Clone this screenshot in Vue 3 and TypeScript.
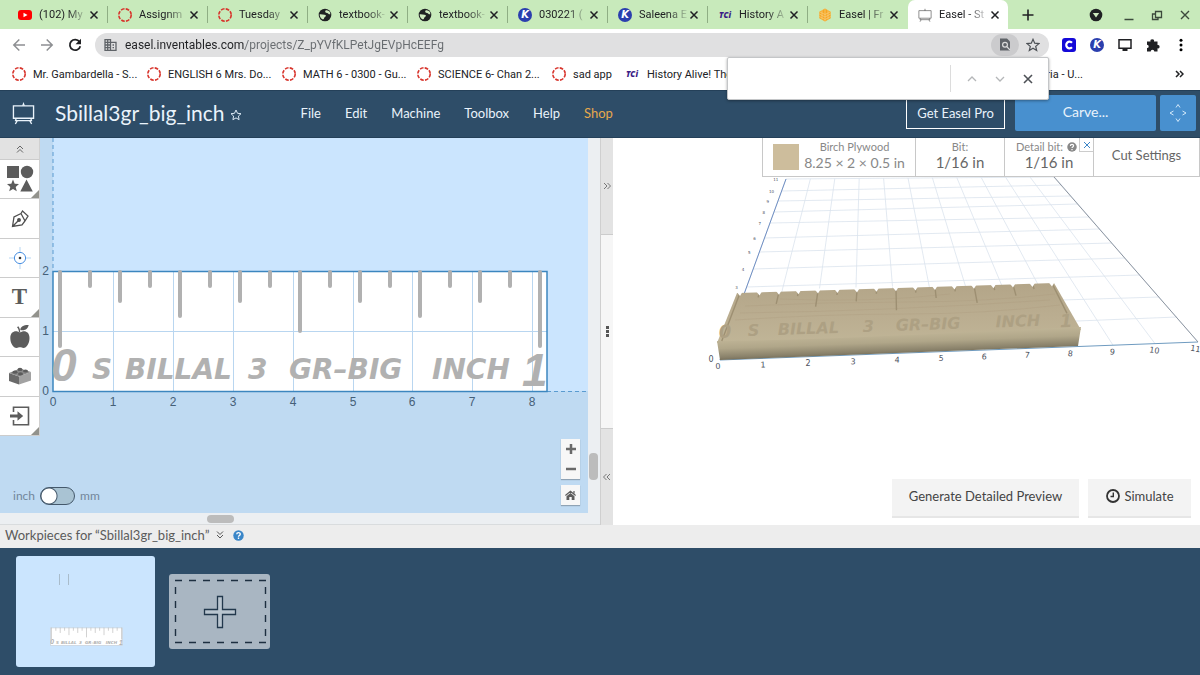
<script setup lang="ts">
import { ref } from 'vue'

interface Tab { icon: string; title: string }
const tabs: Tab[] = [
  { icon: 'youtube', title: '(102) My' },
  { icon: 'canvas', title: 'Assignm' },
  { icon: 'canvas', title: 'Tuesday' },
  { icon: 'globe', title: 'textbook-' },
  { icon: 'globe', title: 'textbook-' },
  { icon: 'kami', title: '030221 (' },
  { icon: 'kami', title: 'Saleena E' },
  { icon: 'tci', title: 'History A' },
  { icon: 'honey', title: 'Easel | Fr' },
  { icon: 'easel', title: 'Easel - St' },
]
const activeTab = ref(9)

const letterIcons: Record<string, string> = { kami: 'K', tci: 'TCi' }

const bookmarks = [
  { icon: 'canvas', title: 'Mr. Gambardella - S...', wide: true },
  { icon: 'canvas', title: 'ENGLISH 6 Mrs. Do...', wide: true },
  { icon: 'canvas', title: 'MATH 6 - 0300 - Gu...', wide: true },
  { icon: 'canvas', title: 'SCIENCE 6- Chan 2...', wide: true },
  { icon: 'canvas', title: 'sad app', wide: false },
  { icon: 'tci', title: 'History Alive! The', wide: false },
]

const url = ref('easel.inventables.com/projects/Z_pYVfKLPetJgEVpHcEEFg')
const query = ref('')
const metric = ref(false)
const menu = ['File', 'Edit', 'Machine', 'Toolbox', 'Help', 'Shop']
const tools = ['shapes', 'pen', 'drill', 'text', 'apple', 'brick', 'import']
const flyouts = ['shapes', 'text', 'import']

const tickEnds = [348, 288, 303, 288, 318, 288, 303, 288, 333, 288, 303, 288, 318, 288, 303, 288, 348]
const ticks = tickEnds.map((end, i) => ({ x: 60 + i * 30, end }))
const inches = Array.from({ length: 9 }, (_, i) => ({ n: i, x: Math.round(53 + i * 59.9) }))
const words = [
  { t: 'S', x: 92 }, { t: 'BILLAL', x: 125 }, { t: '3', x: 248 },
  { t: 'GR–BIG', x: 289 }, { t: 'INCH', x: 432 },
]

const frontX = [720, 765, 810, 854, 898, 942, 985, 1028, 1071, 1113, 1155, 1198]
const floorCols = frontX.map((x, i) => ({
  x1: x, y1: 360 - ((x - 720) * 18) / 478, x2: 786 + i * 24.4, y2: 179 - i * 0.2,
}))
const leftY = [335, 310, 287, 269, 252, 238, 223, 212, 201, 191, 179]
const rightY = [317, 297, 275, 258, 243, 229, 217, 204, 196, 185, 177]
const floorRows = leftY.map((y, i) => ({
  x1: 720 + (360 - y) * 0.364, y1: y, x2: 1198 - (341 - rightY[i]) * 0.878, y2: rightY[i],
}))
const axisX = [718, 763, 808, 853, 897, 941, 984, 1027, 1070, 1112, 1154, 1195].map((x, i) => ({
  n: i, x, y: 369 - i * 1.6,
}))
const axisY = leftY.slice(2).map((y, i) => ({ n: i + 3, x: 714 + (360 - y) * 0.364, y: y + 2 }))
const grooveDepth = [48, 5, 12, 5, 16, 5, 12, 5, 22, 5, 11, 5, 17, 5, 11, 5, 30]
const grooves = grooveDepth.map((d, i) => {
  const x = 740 + i * 19.5
  const y = 293 - i * 0.6
  const lean = i === 0 ? -0.38 : i === 16 ? 0.5 : (i - 7.5) * 0.042
  return { x, y, x2: x + lean * d, y2: y + d }
})
const carved = [
  { t: 'S', x: 748 }, { t: 'BILLAL', x: 778 }, { t: '3', x: 863 },
  { t: 'GR–BIG', x: 896 }, { t: 'INCH', x: 996 },
]
</script>

<template>
  <svg class="defs" aria-hidden="true">
    <symbol id="youtube" viewBox="0 0 14 14"><rect y="2" width="14" height="10" rx="3" fill="#f00" /><path d="M5.500 4.800 9.500 7 5.500 9.200z" fill="#fff" /></symbol>
    <symbol id="canvas" viewBox="0 0 14 14"><circle cx="7" cy="7" r="6.200" fill="none" stroke="#d8342c" stroke-width="1.600" stroke-dasharray="3.600 1.270" /></symbol>
    <symbol id="globe" viewBox="0 0 14 14"><circle cx="7" cy="7" r="6.300" fill="#202124" /><path d="M7.500 2.500c-1 1.400.2 2.300 1.600 2.400 1.200.1 1.300 1.500 3.200 1.300.3-1.700-1.500-4.500-4.800-3.700zM1.700 6.300c1.800-.3 3.400.5 4.700.5 1.800 0 2 1.500.6 2.100-1.300.6-.5 1.900-2 2.600C3 10.700 1.500 9 1.700 6.300z" fill="#cfe9c0" /></symbol>
    <symbol id="honey" viewBox="0 0 14 14"><path d="M7 .5 12.700 3.700v6.600L7 13.500 1.300 10.300V3.700z" fill="#f5a623" /><path d="M1.300 6 7 9l5.700-3M1.300 8.500 7 11.500l5.700-3M7 .5v13M4 2v9.500M10 2v9.500M1.300 3.700 7 6.500l5.700-2.800" fill="none" stroke="#f9cf7e" stroke-width=".7" /></symbol>
    <symbol id="easel" viewBox="0 0 24 24"><path d="M1.500 4.500h21v13h-21zM4 17.500v2.500M20 17.500v2.500M3 20h18M5.500 20l-2 3.500M18.500 20l2 3.500" fill="none" stroke="currentColor" stroke-width="1.400" /><path d="M10.500 4.500 12 .5l1.500 4z" fill="currentColor" /></symbol>
    <symbol id="help" viewBox="0 0 12 12"><circle cx="6" cy="6" r="5.700" fill="currentColor" /><path d="M4.100 4.700c0-2.500 3.900-2.400 3.800-.1C7.900 6 6 5.900 6 7.300M6 8.300v1.500" fill="none" stroke="#fff" stroke-width="1.500" /></symbol>
  </svg>

  <div class="page">
    <header class="browser">
      <nav class="tabs" aria-label="Tabs">
        <div v-for="(tab, i) in tabs" :key="i" class="tab" :class="{ active: i === activeTab, last: i === activeTab - 1 }">
          <button class="tab-main" @click="activeTab = i">
            <span v-if="letterIcons[tab.icon]" :class="tab.icon">{{ letterIcons[tab.icon] }}</span>
            <svg v-else class="fav"><use :href="'#' + tab.icon" /></svg>
            <span class="tab-title">{{ tab.title }}</span>
          </button>
          <button class="tab-close" aria-label="Close tab"><svg width="10" height="10"><path d="M1.500 1.500l7 7M8.500 1.500l-7 7" stroke="#202124" stroke-width="1.500" /></svg></button>
        </div>
        <button class="new-tab" aria-label="New tab"><svg width="12" height="12"><path d="M6 .5v11M.5 6h11" stroke="#202124" stroke-width="1.600" /></svg></button>
        <div class="window-buttons">
          <button aria-label="Tab search"><svg width="14" height="14"><circle cx="7" cy="7" r="6.300" fill="#202124" /><path d="M3.800 5h6.400L7 9.600z" fill="#cfe9c0" /></svg></button>
          <button aria-label="Minimize"><svg width="12" height="12"><path d="M1.500 10.500h9" stroke="#3c4a3c" stroke-width="1.500" /></svg></button>
          <button aria-label="Restore"><svg width="12" height="12"><path d="M4.500 2.500h6v6h-6zM4 5H1.500v5.500H7V9" fill="none" stroke="#3c4a3c" stroke-width="1.300" /></svg></button>
          <button aria-label="Close"><svg width="12" height="12"><path d="M2 2l8 8M10 2l-8 8" stroke="#3c4a3c" stroke-width="1.400" /></svg></button>
        </div>
      </nav>

      <div class="toolbar">
        <button class="tb" aria-label="Back"><svg width="14" height="14"><path d="M13 7H2M7.300 1.500 1.800 7l5.500 5.500" fill="none" stroke="#8d8f92" stroke-width="1.500" /></svg></button>
        <button class="tb" aria-label="Forward"><svg width="14" height="14"><path d="M1 7h11M6.700 1.500 12.200 7l-5.500 5.500" fill="none" stroke="#8d8f92" stroke-width="1.500" /></svg></button>
        <button class="tb" aria-label="Reload"><svg width="14" height="14"><path d="M11.500 3.800A5.300 5.300 0 1 0 12.300 8.200" fill="none" stroke="#202124" stroke-width="1.800" /><path d="M13 .8v5.500H7.500z" fill="#202124" /></svg></button>
        <div class="omnibox">
          <svg width="13" height="12" viewBox="0 0 13 12"><path d="M1 .7h5.500v10.600H1zM6.500 3.300H12v8H6.500M1 3.300h5.500M1 6h5.500M1 8.700h5.500M3.700.7v10.600M8.500 6H10M8.500 8.700H10" fill="none" stroke="#5f6368" stroke-width="1.300" /></svg>
          <input v-model="url" aria-label="Address" spellcheck="false">
          <button class="chip" aria-label="Find in page"><svg width="12" height="13"><path d="M1 .5h7l3 3v9H1z" fill="#5f6368" /><circle cx="6" cy="6.800" r="2.400" fill="#5f6368" stroke="#dcdcdc" stroke-width="1.200" /><path d="M7.800 8.600 11 12" stroke="#dcdcdc" stroke-width="1.200" /></svg></button>
          <button class="tb" aria-label="Bookmark"><svg width="14" height="14"><path d="M7 1.300 8.700 5.200l4.200.4-3.200 2.800 1 4.100L7 10.300l-3.700 2.200 1-4.100L1.100 5.600l4.200-.4z" fill="none" stroke="#4d5156" stroke-width="1.200" /></svg></button>
        </div>
        <button class="tb" aria-label="Clever"><svg width="14" height="14"><rect width="14" height="14" rx="3" fill="#1409d8" /><path d="M10 4.800A3.300 3.300 0 1 0 10 9.200" fill="none" stroke="#fff" stroke-width="2.200" /></svg></button>
        <button class="tb" aria-label="Kami"><span class="kami">K</span></button>
        <button class="tb" aria-label="Screen"><svg width="14" height="14"><path d="M1 1.700h12v8.600H1z" fill="none" stroke="#202124" stroke-width="1.500" /><path d="M4.500 10.500h5v2.500h-5z" fill="#202124" /></svg></button>
        <button class="tb" aria-label="Extensions"><svg width="14" height="14"><path d="M1 3.500h3.500a1.800 1.800 0 1 1 3.500 0h3.500V7a1.700 1.700 0 1 1 0 3.300V13.500H8.300a1.800 1.800 0 0 0-3.600 0H1v-3.400a1.700 1.700 0 0 0 0-3.400z" fill="#202124" /></svg></button>
        <button class="tb" aria-label="Menu"><svg width="4" height="14"><circle cx="2" cy="2.200" r="1.500" /><circle cx="2" cy="7" r="1.500" /><circle cx="2" cy="11.800" r="1.500" /></svg></button>
      </div>

      <nav class="bookmarks" aria-label="Bookmarks">
        <a v-for="(b, i) in bookmarks" :key="i" href="#" :class="{ wide: b.wide }"><span v-if="letterIcons[b.icon]" :class="b.icon">{{ letterIcons[b.icon] }}</span><svg v-else class="fav"><use :href="'#' + b.icon" /></svg>{{ b.title }}</a>
        <a href="#" class="tail">ria - U...</a>
        <button aria-label="More bookmarks"><svg width="9" height="8"><path d="M1 1l3 3-3 3M5 1l3 3-3 3" fill="none" stroke="#202124" stroke-width="1.500" /></svg></button>
      </nav>

      <form class="find" @submit.prevent>
        <input v-model="query" aria-label="Find in page">
        <button type="button" aria-label="Previous"><svg width="10" height="10"><path d="M1 7 5 3l4 4" fill="none" stroke="#b4b6b8" stroke-width="1.300" /></svg></button>
        <button type="button" aria-label="Next"><svg width="10" height="10"><path d="M1 3l4 4 4-4" fill="none" stroke="#b4b6b8" stroke-width="1.300" /></svg></button>
        <button type="button" aria-label="Close find"><svg width="10" height="10"><path d="M1 1l8 8M9 1l-8 8" stroke="#4d5156" stroke-width="1.600" /></svg></button>
      </form>
    </header>

    <header class="app-bar">
      <svg class="logo"><use href="#easel" /></svg>
      <h1>Sbillal3gr_big_inch</h1>
      <button class="star" aria-label="Favorite"><svg width="12" height="12"><path d="M6 1l1.500 3.300 3.500.4L8.400 7.100l.7 3.600L6 8.900l-3.100 1.800.7-3.600L1 4.700l3.500-.4z" fill="none" stroke="#dbe9f5" /></svg></button>
      <nav class="menu"><button v-for="m in menu" :key="m" :class="{ shop: m === 'Shop' }">{{ m }}</button></nav>
      <button class="pro">Get Easel Pro</button>
      <button class="carve">Carve...</button>
      <button class="jog" aria-label="Jog machine"><svg width="18" height="20"><path d="M7 4.500 9 1.500l2 3M7 15.500l2 3 2-3M4.500 8l-3.500 2 3.500 2M13.500 8l3.500 2-3.500 2" fill="none" stroke="#d3e9fa" /></svg></button>
    </header>

    <main>
      <section class="editor">
        <div class="canvas">
          <svg class="board" role="img" aria-label="Ruler design">
            <g transform="translate(0 -138)">
              <rect x="53" y="138" width="100%" height="253" fill="#cbe5fe" />
              <rect x="53" y="271" width="494" height="120" fill="#fff" />
              <path d="M53 138v133M547 391.500h900" stroke="#5a9bd0" stroke-dasharray="4 3" />
              <g stroke="#b9d6f0"><path v-for="p in inches.slice(1)" :key="p.n" :d="`M${p.x}.5 272V391`" /><path d="M53 331.500h494" /></g>
              <rect x="53" y="271.500" width="494" height="120" fill="none" stroke="#3c86bf" stroke-width="1.500" />
              <path v-for="k in ticks" :key="k.x" :d="`M${k.x} 272V${k.end - 2}`" class="tick" />
              <g class="lettering">
                <text x="51" y="381" class="numeral">0</text>
                <text v-for="w in words" :key="w.t" :x="w.x" y="379">{{ w.t }}</text>
                <text x="522" y="386" class="numeral">1</text>
              </g>
              <g class="scale">
                <text v-for="p in inches" :key="p.n" :x="p.x" y="406" text-anchor="middle">{{ p.n }}</text>
                <text x="49" y="275" text-anchor="end">2</text><text x="49" y="335" text-anchor="end">1</text><text x="49" y="395" text-anchor="end">0</text>
              </g>
            </g>
          </svg>

          <div class="tools">
            <button class="collapse" aria-label="Collapse tools"><svg width="8" height="8"><path d="M1 4l3-3 3 3M1 7.500l3-3 3 3" fill="none" stroke="#666" /></svg></button>
            <button v-for="t in tools" :key="t" class="tool" :class="{ flyout: flyouts.includes(t) }" :aria-label="t">
              <svg v-if="t === 'shapes'" width="28" height="28"><g fill="#5c5c5c"><path d="M1 1h12v12H1zM7 14.500l1.700 4.200 4.300.3-3.300 2.900 1.100 4.400L7 23.900l-3.800 2.400 1.100-4.400L1 19l4.300-.3zM20.500 14.500l6.300 12H14.300z" /><circle cx="21" cy="7" r="6.200" /></g></svg>
              <svg v-else-if="t === 'pen'" width="20" height="20" fill="none" stroke="#4f4f4f" stroke-width="1.300"><path d="M2.500 17.500 4 8l7-3.500 4 7.500-3 4zM11 4.500l1.500-2.500 5.500 5-3 5M2.500 17.500l6-6" /><circle cx="9" cy="11" r="1.300" fill="#4f4f4f" /></svg>
              <svg v-else-if="t === 'drill'" width="22" height="22"><path d="M11 0v22M0 11h22" stroke="#b5d5f2" /><circle cx="11" cy="11" r="5.600" fill="#fff" stroke="#4a90e2" /><circle cx="11" cy="11" r="1.300" fill="#333" /></svg>
              <span v-else-if="t === 'text'" class="type">T</span>
              <svg v-else-if="t === 'apple'" width="22" height="26"><path d="M11 8.800C7.500 5.900 1.300 6.900 1.300 14c0 5.600 3.200 10 6.200 10 1.500 0 2-.7 3.500-.7s2 .7 3.500.7c3 0 6-4.400 6-10 0-7.100-6.200-8.100-9.500-5.200zM10 8.500C9.800 5.900 9.300 4.500 8 3.200l1.300-1C10.700 3.700 11.200 5.700 11.300 8.500zM11.300 6C11.500 2.300 15 .8 19.700 1 19 4.500 16.300 7.200 11.300 6z" fill="#5c5c5c" /></svg>
              <svg v-else-if="t === 'brick'" width="24" height="20"><path d="M1 7l10 3.500v8L1 15z" fill="#6a6a6a" /><path d="M11 10.500 23 6v8.500l-12 4z" fill="#a2a2a2" /><path d="M1 7l11-4.500L23 6l-12 4.500z" fill="#8a8a8a" /><g fill="#5c5c5c"><ellipse cx="7" cy="6.200" rx="2.500" ry="1.600" /><ellipse cx="12.500" cy="7.900" rx="2.500" ry="1.600" /><ellipse cx="12" cy="3.400" rx="2.500" ry="1.600" /><ellipse cx="17.500" cy="5" rx="2.500" ry="1.600" /></g></svg>
              <svg v-else width="20" height="20"><path d="M3.500 6V1.300h15v17.400h-15V14" fill="none" stroke="#5c5c5c" stroke-width="1.600" /><path d="M0 8.500h7.500V5.300l5.700 4.700-5.700 4.700v-3.200H0z" fill="#5c5c5c" /></svg>
            </button>
          </div>

          <label class="units"><span>inch</span><input v-model="metric" type="checkbox"><span>mm</span></label>

          <div class="zoom">
            <div class="pair">
              <button aria-label="Zoom in"><svg width="10" height="10"><path d="M5 0v10M0 5h10" stroke="#6a6a6a" stroke-width="2.500" /></svg></button>
              <button aria-label="Zoom out"><svg width="10" height="10"><path d="M0 5h10" stroke="#6a6a6a" stroke-width="2.500" /></svg></button>
            </div>
            <button class="home" aria-label="Fit view"><svg width="11" height="10"><path d="M5.500 3 9.500 6.300V10H6.700V7H4.300v3H1.500V6.300z" fill="#5c5c5c" /><path d="M.4 5.500 5.500 1.200 10.600 5.500M9 1v2.500" fill="none" stroke="#5c5c5c" stroke-width="1.200" /></svg></button>
          </div>
        </div>
        <div class="track-v"><i></i></div>
        <div class="track-h"><i></i></div>
      </section>

      <div class="divider">
        <button aria-label="Expand editor"><svg width="8" height="8"><path d="M1 1l3 3-3 3M4.500 1l3 3-3 3" fill="none" stroke="#777" /></svg></button>
        <span class="grip"><svg width="3" height="11"><path d="M0 0h3v3H0zM0 4h3v3H0zM0 8h3v3H0z" fill="#555" /></svg></span>
        <button aria-label="Expand preview"><svg width="8" height="8"><path d="M3.500 1l-3 3 3 3M7 1 4 4l3 3" fill="none" stroke="#777" /></svg></button>
      </div>

      <section class="preview">
        <svg class="scene" viewBox="613 138 587 387" role="img" aria-label="Carving preview">
          <defs>
            <linearGradient id="wood" x1="0" y1="0" x2="0" y2="1"><stop offset="0" stop-color="#b3a588" /><stop offset=".6" stop-color="#bbae91" /><stop offset="1" stop-color="#c0b597" /></linearGradient>
            <linearGradient id="face" gradientUnits="userSpaceOnUse" x1="880" y1="334" x2="880.800" y2="356"><stop offset="0" stop-color="#bfb496" /><stop offset=".4" stop-color="#b0a689" /><stop offset=".8" stop-color="#89816a" /><stop offset="1" stop-color="#6b6551" /></linearGradient>
          </defs>
          <g stroke="#dbe3ee" stroke-width=".8">
            <line v-for="(l, i) in floorCols" :key="'c' + i" v-bind="l" />
            <line v-for="(l, i) in floorRows" :key="'r' + i" v-bind="l" />
          </g>
          <path d="M720 360 786 179" stroke="#6f8ec2" /><path d="M720 360 1198 342" stroke="#6f9bc0" /><path d="M1198 342 1054 177" stroke="#8d95a0" />
          <path d="M737 293 1054 283 1081 330 900 339 717 343z" fill="url(#wood)" />
          <path d="M717 341C840 340 960 332 1081 327L1078 346 720 360z" fill="url(#face)" />
          <path d="M745 306q80-4 160-4t150-8M735 320q90-6 170-6t155-9M780 299q90 4 170-5M740 313q150-2 310-13" fill="none" stroke="#ab9c7d" stroke-width=".7" opacity=".5" />
          <path v-for="(g, i) in grooves" :key="i" :d="`M${g.x} ${g.y}L${g.x2} ${g.y2}`" stroke="#9d8f72" stroke-width="1.400" />
          <path v-for="(g, i) in grooves" :key="'n' + i" :d="`M${g.x - 4} ${g.y - 2}h7l-3 5z`" fill="#fff" />
          <g class="carved" transform="rotate(-2 720 336)">
            <text x="719" y="338" class="big">0</text>
            <text v-for="w in carved" :key="w.t" :x="w.x" y="337">{{ w.t }}</text>
            <text x="1060" y="339" class="big">1</text>
          </g>
          <g class="axis">
            <text v-for="a in axisX" :key="'x' + a.n" :x="a.x" :y="a.y" :transform="`rotate(${a.n - 2} ${a.x} ${a.y})`">{{ a.n }}</text>
            <text x="711" y="362">0</text>
          </g>
          <g class="axis far"><text v-for="a in axisY" :key="'y' + a.n" :x="a.x - 4" :y="a.y">{{ a.n }}</text></g>
        </svg>

        <div class="settings">
          <button class="material"><i class="swatch"></i><span><small>Birch Plywood</small><b>8.25 × 2 × 0.5 in</b></span></button>
          <button class="bit"><small>Bit:</small><b>1/16 in</b></button>
          <div class="bit detail"><button><small>Detail bit: <svg width="10" height="10"><use href="#help" /></svg></small><b>1/16 in</b></button><button class="remove" aria-label="Remove detail bit"><svg width="8" height="8"><path d="M1 1l6 6M7 1 1 7" stroke="#3c86c8" /></svg></button></div>
          <button class="cut">Cut Settings</button>
        </div>

        <div class="actions">
          <button class="generate">Generate Detailed Preview</button>
          <button class="simulate"><svg width="14" height="14"><circle cx="7" cy="7" r="6" fill="none" stroke="#333" stroke-width="1.800" /><path d="M7.300 3.500v4H4.500" fill="none" stroke="#333" stroke-width="1.400" /></svg>Simulate</button>
        </div>
      </section>
    </main>

    <section class="workpieces">
      <h2>Workpieces for “Sbillal3gr_big_inch” <svg width="8" height="8"><path d="M1 .5l3 3 3-3M1 4l3 3 3-3" fill="none" stroke="#555" /></svg><svg class="info" width="11" height="11"><use href="#help" /></svg></h2>
      <div class="shelf">
        <button class="thumb" aria-label="Workpiece 1">
          <svg width="139" height="111">
            <path d="M43.500 18v11M52.500 18v11" stroke="#a9bccb" />
            <svg x="34" y="71" width="73" height="19" viewBox="50 265 500 130">
              <rect x="53" y="271" width="494" height="120" fill="#fff" stroke="#c9d3dc" stroke-width="5" />
              <path v-for="k in ticks" :key="k.x" :d="`M${k.x} 272V${k.end}`" class="tick" />
              <g class="lettering"><text x="51" y="381" class="numeral">0</text><text v-for="w in words" :key="w.t" :x="w.x" y="378">{{ w.t }}</text><text x="522" y="386" class="numeral">1</text></g>
            </svg>
          </svg>
        </button>
        <button class="add" aria-label="Add workpiece">
          <svg width="101" height="75"><path d="M6 6.500h92M6 68.500h92" stroke="#1d2f40" stroke-width="1.400" stroke-dasharray="7 7" /><path d="M6.500 13v50M96.500 13v50" stroke="#1d2f40" stroke-width="1.400" stroke-dasharray="7 7" /><path d="M48.500 22.500h5v13h13v5h-13v13h-5v-13h-13v-5h13z" fill="#b9c5cf" stroke="#22384c" stroke-width="1.300" /></svg>
        </button>
      </div>
    </section>
  </div>
</template>

<style>
body { margin: 0; }
</style>

<style scoped>
* { box-sizing: border-box; }
button { border: 0; padding: 0; margin: 0; background: none; font: inherit; color: inherit; display: flex; align-items: center; justify-content: center; cursor: pointer; }
svg { display: block; flex: none; }
.defs { position: absolute; width: 0; height: 0; }
.page { min-height: 100vh; display: flex; flex-direction: column; font-family: Lato, "Open Sans", sans-serif; font-size: 13px; background: #fff; }

.browser { position: relative; font-family: Roboto, "Noto Sans", sans-serif; font-size: 11px; color: #202124; }
.tabs { display: flex; align-items: center; height: 29px; padding: 0 1px 0 8px; background: #c8eabb; }
.tab { display: flex; align-items: center; flex: 0 1 100px; min-width: 0; height: 17px; padding-left: 10px; border-right: 1px solid #8fae84; }
.tab.last { border-color: transparent; }
.tab.active { height: 29px; background: #fff; border: 0; border-radius: 7px 7px 0 0; }
.tab-main { flex: 1; min-width: 0; justify-content: flex-start; gap: 7px; }
.fav { width: 14px; height: 14px; color: #777; }
.kami, .tci { flex: none; width: 14px; font: italic bold 10px/14px "DejaVu Sans", sans-serif; }
.kami { height: 14px; border-radius: 7px; background: #2b3fae; color: #fff; text-align: center; }
.tci { font: italic 800 8px/14px "Open Sans", sans-serif; color: #3c1d86; }
.tab-title { flex: 1; white-space: nowrap; text-align: left; line-height: 16px; mask-image: linear-gradient(to right, #000 60%, rgba(0, 0, 0, .15)); }
.tab-close { width: 22px; justify-content: flex-start; padding-left: 4px; }
.new-tab { width: 40px; height: 28px; }
.window-buttons { display: flex; margin-left: auto; }
.window-buttons button { width: 28px; }
.window-buttons button:first-child { width: 38px; }
.toolbar { display: flex; align-items: center; height: 31px; padding: 0 5px; }
.tb { width: 28px; height: 24px; }
.omnibox { flex: 1; display: flex; align-items: center; height: 24px; margin: 0 6px; padding: 0 2px 0 9px; background: #e0e0e1; border-radius: 12px; }
.omnibox input { flex: 1; min-width: 0; margin-left: 8px; padding: 0; border: 0; outline: 0; font: 12px/20px Roboto, sans-serif; color: transparent; background: linear-gradient(to right, #202124 120px, #686c70 120px); background-clip: text; -webkit-background-clip: text; }
.chip { width: 28px; height: 22px; border-radius: 11px; background: #cbcbcd; }
.bookmarks { display: flex; align-items: center; gap: 14px; height: 30px; padding: 0 16px 2px 12px; white-space: nowrap; }
.bookmarks a { display: flex; align-items: center; gap: 7px; color: inherit; text-decoration: none; }
.bookmarks .wide { width: 121px; }
.bookmarks .tail { margin-left: auto; margin-right: 78px; }
.find { position: absolute; z-index: 5; top: 57px; right: 151px; width: 322px; height: 43px; display: flex; align-items: center; padding-right: 6px; background: #fff; border: 1px solid #c4c6c8; border-radius: 2px; box-shadow: 0 1px 3px rgba(0, 0, 0, .35); }
.find input { flex: 1; min-width: 0; height: 27px; margin-right: 7px; border: 0; border-right: 1px solid #dcdcdc; outline: 0; }
.find button { width: 28px; height: 28px; }

.app-bar { display: flex; align-items: center; height: 48px; padding: 0 4px 2px 12px; background: #2e4d68; color: #eaf3fb; border-top: 1px solid #244059; border-bottom: 1px solid #244059; }
.logo { width: 23px; height: 24px; }
h1 { margin: 0 0 0 20px; font-size: 21px; font-weight: 400; line-height: 24px; }
.star { margin: 4px 0 0 5px; }
.menu { display: flex; gap: 24px; margin-left: 59px; }
.shop { color: #e6a84c; }
.pro { width: 99px; height: 31px; margin-left: auto; border: 1px solid #fff; }
.carve { width: 141px; height: 36px; margin: 0 4px 0 10px; padding-bottom: 3px; background: #4890cf; border-radius: 2px; font-size: 14px; }
.jog { width: 36px; height: 36px; background: #4890cf; border-radius: 2px; }

main { flex: 1; display: flex; min-height: 387px; }
.editor { flex: 0 0 50%; min-width: 0; display: grid; grid-template-columns: minmax(0, 1fr) 12px; grid-template-rows: minmax(0, 1fr) 12px; background: #ebeff3; }
.canvas { position: relative; overflow: hidden; background: #bfdaf2; }
.board { position: absolute; inset: 0; width: 100%; height: 100%; }
.tick { stroke: #b1b1b1; stroke-width: 4; stroke-linecap: round; }
.lettering { font: italic bold 28px "DejaVu Sans", sans-serif; fill: #b1b1b1; }
.numeral { font: italic bold 46px "Liberation Sans", sans-serif; }
.scale { font: 12px "Liberation Sans", sans-serif; fill: #456078; }
.tools { position: absolute; top: 0; left: 0; display: flex; flex-direction: column; width: 40px; height: 298px; background: #fff; border-right: 1px solid #d0d0d0; }
.collapse { width: 100%; height: 21px; background: #e2e2e2; }
.tool { position: relative; flex: 1; width: 100%; border-top: 1px solid #ccc; }
.tool:last-child { border-bottom: 1px solid #ccc; }
.flyout::after { content: ""; position: absolute; right: 0; bottom: 0; border: 4px solid; border-color: transparent #92928c #92928c transparent; }
.type { font: bold 23px/24px "Liberation Serif", serif; color: #5c5c5c; }
.units { position: absolute; left: 13px; bottom: 8px; display: flex; align-items: center; gap: 5px; font-size: 12px; line-height: 18px; color: #72869a; }
.units input { appearance: none; width: 35px; height: 18px; margin: 0; border: 1px solid #44586b; border-radius: 9px; background: radial-gradient(circle at 8px 8px, #fff 7px, #44586b 8px, transparent 9px) #a9c3d3; }
.units input:checked { background-position: 17px 0; }
.zoom { position: absolute; right: 8px; bottom: 8px; width: 19px; }
.zoom button { width: 19px; height: 20px; background: #f7f7f7; }
.pair, .home { box-shadow: 0 1px 1px rgba(0, 0, 0, .25); }
.home { margin-top: 6px; }
.track-v, .track-h { display: flex; background: #eceff2; }
.track-v { padding: 315px 0 0 1px; }
.track-v i { width: 9px; height: 27px; border-radius: 4px; background: #bcbcbc; }
.track-h { grid-column: 1 / 3; padding: 2px 0 0 207px; border-bottom: 1px solid #d9dcde; }
.track-h i { width: 27px; height: 8px; border-radius: 4px; background: #bcbcbc; }
.divider { flex: 0 0 13px; display: flex; flex-direction: column; border-left: 1px solid #cfcfcf; background: #f6f6f6; }
.divider button { flex: 1; background: #e3e3e3; }
.grip { flex: 2; display: flex; align-items: center; justify-content: center; border: 1px solid #ccc; border-width: 1px 0; }
.preview { position: relative; flex: 1; min-width: 0; }
.scene { width: 100%; height: 100%; }
.carved { font: italic bold 16px "DejaVu Sans", sans-serif; fill: #ada083; }
.carved .big { font-size: 18px; }
.axis { font: 8px "DejaVu Sans", sans-serif; fill: #4c5260; text-anchor: middle; }
.far { font-size: 4px; }
.settings { position: absolute; top: 0; right: 0; display: flex; height: 39px; background: #fff; color: #666; border: 1px solid #c8c8c8; border-top: 0; }
.settings > * + * { border-left: 1px solid #c8c8c8; }
.settings small, .settings b { display: block; font-weight: 400; }
.settings small { font-size: 11px; line-height: 15px; color: #888; }
.settings b { font-size: 15px; line-height: 17px; }
.settings .material { width: 152px; gap: 5px; color: #888; }
.material span { padding-bottom: 4px; }
.settings .material b { font-size: 14px; }
.swatch { width: 26px; height: 26px; background: #cdbd9c; }
.bit { width: 89px; display: flex; flex-direction: column; justify-content: center; position: relative; padding-bottom: 4px; }
.detail button { display: block; }
.detail small { display: flex; align-items: center; justify-content: center; gap: 4px; padding-right: 5px; }
.detail b { text-align: center; }
.settings .remove { position: absolute; top: 0; right: 0; width: 14px; height: 14px; display: flex; align-items: center; border: 1px solid #ccc; border-width: 0 0 1px 1px; }
.cut { width: 106px; padding-bottom: 4px; }
.actions { position: absolute; right: 9px; bottom: 7px; display: flex; gap: 9px; }
.actions button { height: 39px; padding-bottom: 3px; background: #f3f3f3; border-bottom: 2px solid #e6e6e6; color: #444; }
.actions .generate { width: 187px; }
.actions .simulate { width: 103px; gap: 5px; }

.workpieces { background: #2e4d68; }
h2 { display: flex; align-items: center; height: 23px; margin: 0; padding: 0 5px 3px; background: #ededed; color: #5b5b5b; font-size: 13px; font-weight: 400; }
h2 svg { margin-left: 7px; }
h2 .info { margin-left: 9px; color: #3a86c8; }
.shelf { display: flex; align-items: center; gap: 14px; height: 127px; padding: 0 16px; }
.thumb { background: #cbe5fe; border-radius: 3px; }
.add { background: #a9b6c2; border-radius: 3px; }
</style>
